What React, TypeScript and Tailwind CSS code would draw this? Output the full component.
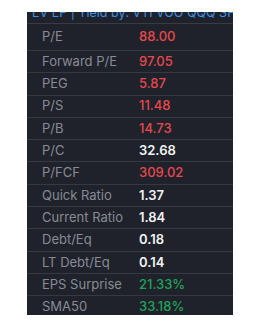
const rows = [
  { label: "P/E", value: "88.00", tone: "red" },
  { label: "Forward P/E", value: "97.05", tone: "red" },
  { label: "PEG", value: "5.87", tone: "red" },
  { label: "P/S", value: "11.48", tone: "red" },
  { label: "P/B", value: "14.73", tone: "red" },
  { label: "P/C", value: "32.68", tone: "white" },
  { label: "P/FCF", value: "309.02", tone: "red" },
  { label: "Quick Ratio", value: "1.37", tone: "white" },
  { label: "Current Ratio", value: "1.84", tone: "white" },
  { label: "Debt/Eq", value: "0.18", tone: "white" },
  { label: "LT Debt/Eq", value: "0.14", tone: "white" },
  { label: "EPS Surprise", value: "21.33%", tone: "green" },
  { label: "SMA50", value: "33.18%", tone: "green" },
];

const toneClass: Record<string, string> = {
  red: "text-[#e5484f] font-medium",
  white: "text-[#f2f3f5] font-semibold",
  green: "text-[#1fa35a] font-medium",
};

export default function App() {
  return (
    <div className="h-[328px] w-[262px] bg-white pt-3 pl-[27px]">
      <div className="h-[303px] w-[206px] overflow-hidden bg-[#1f222a] font-['Inter',sans-serif] text-[13px]">
        <div className="h-[12px] overflow-hidden border-b border-[#373b45]">
          <div className="-mt-[9px] whitespace-nowrap pl-[5px] text-[12.5px] leading-5 text-[#3d8fe0]">
            EV EP | Yield by: VTI VOO QQQ SPY
          </div>
        </div>
        {rows.map((row, i) => (
          <div
            key={row.label}
            className={
              "grid grid-cols-[97px_1fr] items-center border-b border-[#353943] pl-[15px] " +
              (i === 0 ? "h-[27px]" : "h-[22.3px]")
            }
          >
            <span className="text-[#878b96]">{row.label}</span>
            <span className={toneClass[row.tone]}>{row.value}</span>
          </div>
        ))}
      </div>
    </div>
  );
}
